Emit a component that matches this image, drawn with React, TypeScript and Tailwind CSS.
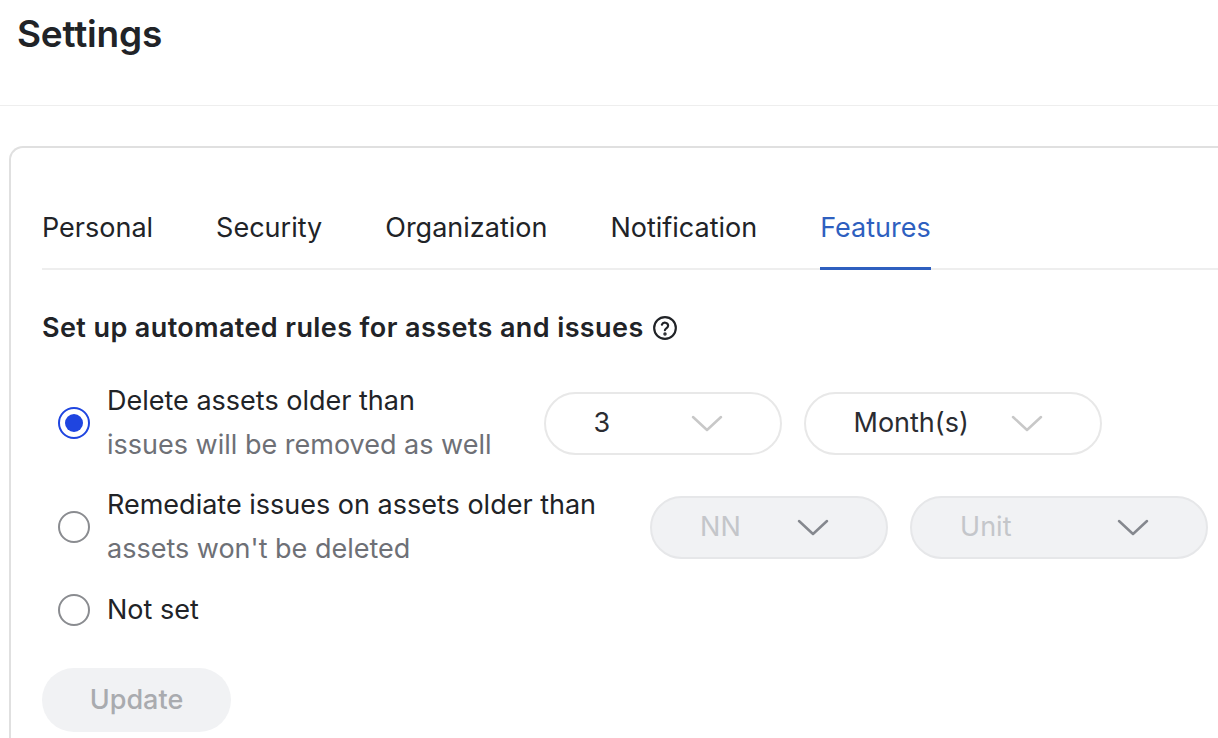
import React from 'react';

const Chevron = ({ color }: { color: string }) => (
  <svg width="34" height="20" viewBox="0 0 34 20" fill="none" stroke={color} strokeWidth="2.5" strokeLinecap="round" strokeLinejoin="round">
    <path d="M3 4l14 13L31 4" />
  </svg>
);

const Select = ({ value, width, disabled }: { value: string; width: string; disabled?: boolean }) => (
  <div className={`${width} h-[63px] rounded-full border-2 flex items-center justify-between pl-12 pr-14 text-[27px] ${disabled ? 'bg-[#f1f2f4] border-[#e6e7e9] text-[#c4c6ca]' : 'bg-white border-[#e8e8e8] text-[#2a2c31]'}`}>
    <span>{value}</span>
    <Chevron color={disabled ? '#85888e' : '#c8c8c8'} />
  </div>
);

const Radio = ({ checked }: { checked?: boolean }) => (
  <div className={`w-[32px] h-[32px] rounded-full border-2 flex items-center justify-center shrink-0 ${checked ? 'border-[#1f45e0]' : 'border-[#8a8c90]'}`}>
    {checked && <div className="w-[18px] h-[18px] rounded-full bg-[#1f45e0]" />}
  </div>
);

export default function App() {
  const tabs = ['Personal', 'Security', 'Organization', 'Notification', 'Features'];
  return (
    <div className="w-[1218px] h-[738px] overflow-hidden bg-white text-[#212327]" style={{ fontFamily: 'Inter, "Noto Sans", sans-serif' }}>
      <div className="h-[106px] border-b border-[#eeeeee] pl-[17px] pt-[12px]">
        <h1 className="text-[37px] font-semibold leading-[44px] tracking-[-0.2px]">Settings</h1>
      </div>
      <div className="mt-[40px] ml-[9px] border-2 border-r-0 border-[#e0e0e0] rounded-tl-[14px] pl-[31px] pt-[60px] h-[700px]">
        <div className="flex gap-[63px] border-b-2 border-[#eeeeee] text-[27px] leading-[40px]">
          {tabs.map(t => (
            <div key={t} className={`pb-[19px] -mb-[2px] border-b-[3px] ${t === 'Features' ? 'border-[#2e5fbf] text-[#2e5fbf]' : 'border-transparent'}`}>{t}</div>
          ))}
        </div>
        <div className="mt-[40px] flex items-center gap-[8px] text-[27px] font-semibold leading-[36px] tracking-[0.4px]">
          Set up automated rules for assets and issues
          <svg width="26" height="26" viewBox="0 0 24 24" fill="none" stroke="#212327" strokeWidth="2">
            <circle cx="12" cy="12" r="10" />
            <path d="M9.1 9a3 3 0 0 1 5.8 1c0 2-3 2.5-3 4" strokeLinecap="round" />
            <circle cx="12" cy="17.5" r="0.6" fill="#212327" />
          </svg>
        </div>
        <div className="mt-[33px] pl-[16px] text-[27px] leading-[44px]">
          <div className="flex items-center">
            <Radio checked />
            <div className="ml-[17px] mr-[52px]">
              <div>Delete assets older than</div>
              <div className="text-[#6e7076]">issues will be removed as well</div>
            </div>
            <div className="flex gap-[22px]">
              <Select value="3" width="w-[238px]" />
              <Select value="Month(s)" width="w-[298px]" />
            </div>
          </div>
          <div className="flex items-center mt-[16px]">
            <Radio />
            <div className="ml-[17px] mr-[54px]">
              <div>Remediate issues on assets older than</div>
              <div className="text-[#6e7076]">assets won't be deleted</div>
            </div>
            <div className="flex gap-[22px]">
              <Select value="NN" width="w-[238px]" disabled />
              <Select value="Unit" width="w-[298px]" disabled />
            </div>
          </div>
          <div className="flex items-center mt-[17px]">
            <Radio />
            <div className="ml-[17px]">Not set</div>
          </div>
        </div>
        <button className="mt-[36px] w-[189px] h-[64px] rounded-full bg-[#f1f2f4] text-[#a9abaf] text-[27px] font-medium">Update</button>
      </div>
    </div>
  );
}
